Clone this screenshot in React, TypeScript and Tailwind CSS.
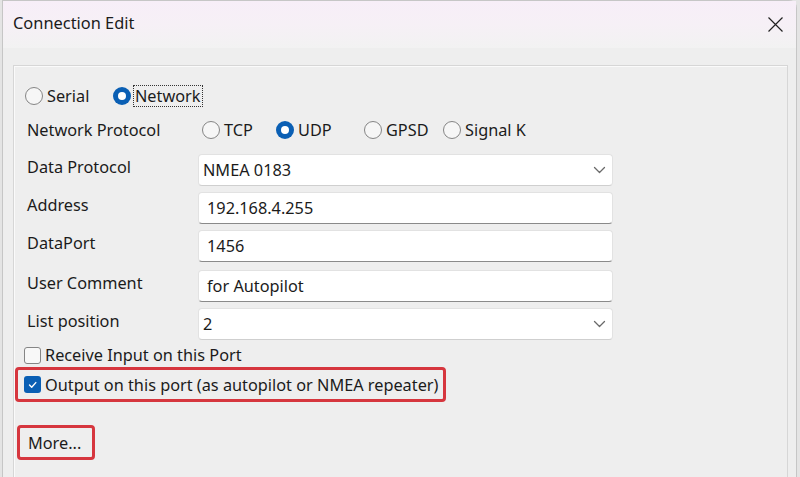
function Radio({ label, checked, focus, width }: { label: string; checked?: boolean; focus?: boolean; width?: string }) {
  return (
    <div className={`flex items-center h-[22px] ${width ?? ""}`}>
      {checked ? (
        <span className="w-[18px] h-[18px] rounded-full bg-[#0a5fb4] flex items-center justify-center shrink-0">
          <span className="w-[8px] h-[8px] rounded-full bg-white" />
        </span>
      ) : (
        <span className="w-[18px] h-[18px] rounded-full border border-[#858585] bg-[#f6f6f6] shrink-0" />
      )}
      <span
        className={`ml-[2px] leading-[20px] px-[1px] ${focus ? "border border-dotted border-[#333]" : "border border-transparent"}`}
      >
        {label}
      </span>
    </div>
  )
}

function Check({ checked }: { checked?: boolean }) {
  if (checked) {
    return (
      <span className="w-[17px] h-[17px] rounded-[3px] bg-[#0a5fb4] flex items-center justify-center shrink-0">
        <svg width="11" height="11" viewBox="0 0 11 11" fill="none" stroke="white" strokeWidth="1.4" strokeLinecap="round" strokeLinejoin="round">
          <path d="M2.5 6l2.2 2.2L8.8 3.6" />
        </svg>
      </span>
    )
  }
  return <span className="w-[17px] h-[17px] rounded-[3px] border border-[#858585] bg-[#f8f8f8] shrink-0" />
}

function Chevron() {
  return (
    <svg width="13" height="8" viewBox="0 0 13 8" fill="none" stroke="#6a6a6a" strokeWidth="1.3" strokeLinecap="round" strokeLinejoin="round">
      <path d="M1.5 1.5l5 5 5-5" />
    </svg>
  )
}

function Field({ label, value, combo }: { label: string; value: string; combo?: boolean }) {
  return (
    <div className="flex items-start">
      <div className="w-[173px] pl-[2px] pt-[2px] leading-[22px]">{label}</div>
      <div
        className={`w-[415px] h-[32px] rounded-[4px] bg-white border border-[#e2e2e2] flex items-center justify-between ${
          combo ? "pl-[4px] pr-[6px] border-b-[#cfcfcf]" : "pl-[8px] border-b-[#8a8a8a]"
        }`}
      >
        <span>{value}</span>
        {combo && <Chevron />}
      </div>
    </div>
  )
}

export default function App() {
  return (
    <div className="w-[800px] h-[477px] overflow-hidden bg-[#e4e4e4] text-[#1b1b1b] text-[16.3px] font-['Noto_Sans',sans-serif]">
      <div className="ml-[2px] mr-[3px] h-full border-x border-t border-[#c6c6c6] rounded-tr-[8px] bg-[#eeeeee] flex flex-col">
        {/* Title bar */}
        <div className="h-[47px] shrink-0 flex items-start justify-between pl-[10px] pr-[12px] bg-gradient-to-b from-[#f7eef8] via-[#f6f0f6] to-[#f2f2f2]">
          <span className="text-[16.4px] leading-[22px] mt-[11px]">Connection Edit</span>
          <svg className="mt-[15px]" width="17" height="17" viewBox="0 0 17 17" fill="none" stroke="#222" strokeWidth="1.2">
            <path d="M1.5 1.5l14 14M15.5 1.5l-14 14" />
          </svg>
        </div>

        {/* Body */}
        <div className="flex-1 pl-[10px] pr-[8px] pt-[17px]">
          <div className="h-full border-t border-x border-[#d6d6d6] shadow-[inset_1px_1px_0_#fafafa] pl-[11px] pt-[19px] flex flex-col">
            <div className="flex">
              <Radio label="Serial" width="w-[88px]" />
              <Radio label="Network" checked focus />
            </div>

            <div className="flex mt-[12px]">
              <div className="w-[177px] pl-[2px] leading-[22px]">Network Protocol</div>
              <Radio label="TCP" width="w-[74px]" />
              <Radio label="UDP" checked width="w-[88px]" />
              <Radio label="GPSD" width="w-[79px]" />
              <Radio label="Signal K" />
            </div>

            <div className="mt-[13px] flex flex-col gap-[6px]">
              <Field label="Data Protocol" value="NMEA 0183" combo />
              <Field label="Address" value="192.168.4.255" />
              <Field label="DataPort" value="1456" />
              <div className="mt-[2px]">
                <Field label="User Comment" value="for Autopilot" />
              </div>
              <Field label="List position" value="2" combo />
            </div>

            <div className="flex items-center gap-[4px] h-[20px] mt-[5px] -ml-[1px]">
              <Check />
              <span className="leading-[20px]">Receive Input on this Port</span>
            </div>

            <div className="self-start -ml-[10px] mt-[2px] border-[3px] border-[#d6363e] rounded-[4px] h-[35px] pl-[6px] pr-[5px] flex items-center gap-[4px]">
              <Check checked />
              <span className="leading-[20px]">Output on this port (as autopilot or NMEA repeater)</span>
            </div>

            <div className="self-start -ml-[8px] mt-[23px] border-[3px] border-[#d6363e] rounded-[4px] w-[78px] h-[35px] pl-[8px] flex items-center">
              <span className="leading-[20px]">More...</span>
            </div>
          </div>
        </div>
      </div>
    </div>
  )
}
